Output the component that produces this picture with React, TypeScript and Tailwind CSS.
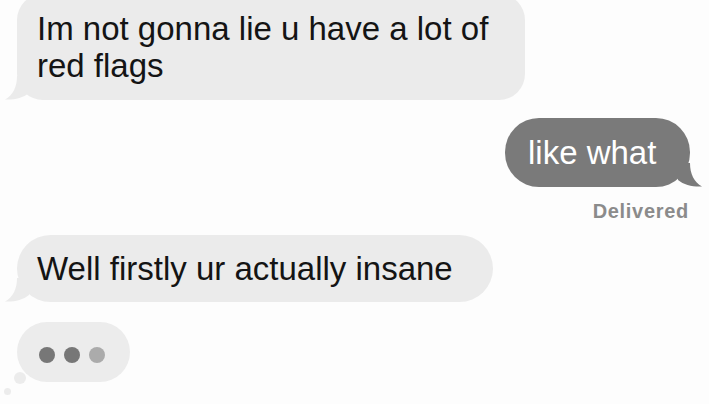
const LIGHT = '#ebebeb';
const DARK = '#7a7a7a';

function TailLeft({ color }: { color: string }) {
  return (
    <svg className="absolute left-[-12px] bottom-0" width="32" height="24" viewBox="0 0 32 24">
      <path d="M12 0 C12 11 8 19 0 23.5 C9 24 18 22 24 17 L24 0 Z" fill={color} />
    </svg>
  );
}

function TailRight({ color }: { color: string }) {
  return (
    <svg className="absolute right-[-12px] bottom-0" width="32" height="24" viewBox="0 0 32 24">
      <path d="M20 0 C20 11 24 19 32 23.5 C23 24 14 22 8 17 L8 0 Z" fill={color} />
    </svg>
  );
}

export default function App() {
  return (
    <div className="w-[709px] h-[404px] overflow-hidden bg-[#fdfdfd] font-['Liberation_Sans',Arial,sans-serif] text-[#141414]">
      <div className="flex flex-col">
        <div className="relative ml-[17px] mt-[-6px] w-[508px] h-[106px] rounded-[26px] bg-[#ebebeb] pl-[20px] pt-[16px] text-[33px] leading-[37px]">
          Im not gonna lie u have a lot of
          <br />
          red flags
          <TailLeft color={LIGHT} />
        </div>

        <div className="flex flex-col items-end pr-[19px] mt-[18px]">
          <div className="relative w-[185px] h-[69px] rounded-[34px] bg-[#7a7a7a] flex items-center pl-[23px] text-[33px] leading-[38px] text-white">
            like what
            <TailRight color={DARK} />
          </div>
          <div className="mt-[12px] mr-[1px] text-[20px] leading-[24px] font-semibold tracking-[0.7px] text-[#8b8b8b]">
            Delivered
          </div>
        </div>

        <div className="relative ml-[17px] mt-[12px] w-[476px] h-[67px] rounded-[34px] bg-[#ebebeb] flex items-center pl-[20px] text-[33px] leading-[38px]">
          Well firstly ur actually insane
          <TailLeft color={LIGHT} />
        </div>

        <div className="relative ml-[17px] mt-[20px] w-[113px] h-[60px] rounded-full bg-[#ececec] flex items-center gap-[9px] pl-[22px] pt-[5px]">
          <span className="w-[16px] h-[16px] rounded-full bg-[#777777]" />
          <span className="w-[16px] h-[16px] rounded-full bg-[#777777]" />
          <span className="w-[16px] h-[16px] rounded-full bg-[#ababab]" />
          <span className="absolute left-[-3px] bottom-[-2px] w-[12px] h-[12px] rounded-full bg-[#ececec]" />
          <span className="absolute left-[-13px] bottom-[-13px] w-[7px] h-[7px] rounded-full bg-[#ececec]" />
        </div>
      </div>
    </div>
  );
}
